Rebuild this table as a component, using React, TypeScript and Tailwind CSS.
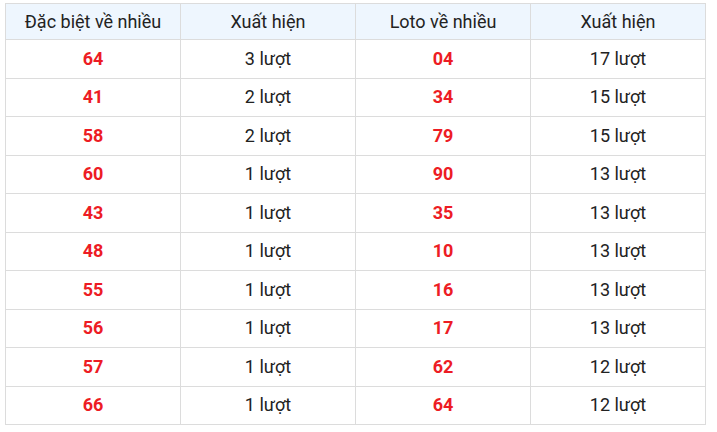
const ROWS: [string, number, string, number][] = [
  ["64", 3, "04", 17],
  ["41", 2, "34", 15],
  ["58", 2, "79", 15],
  ["60", 1, "90", 13],
  ["43", 1, "35", 13],
  ["48", 1, "10", 13],
  ["55", 1, "16", 13],
  ["56", 1, "17", 13],
  ["57", 1, "62", 12],
  ["66", 1, "64", 12],
]

const HEADERS = ["Đặc biệt về nhiều", "Xuất hiện", "Loto về nhiều", "Xuất hiện"]

export default function App() {
  return (
    <div className="h-[432px] w-[717px] bg-white pl-[5px] pt-[3px] font-['Roboto',sans-serif]">
      <table className="w-[701px] table-fixed border-collapse text-center text-[18px] leading-none text-[#222]">
        <thead>
          <tr className="h-[36px] bg-[#eef6fe]">
            {HEADERS.map((h, i) => (
              <th key={i} className="border border-[#dcdcdc] font-normal">
                {h}
              </th>
            ))}
          </tr>
        </thead>
        <tbody>
          {ROWS.map(([db, dbCount, loto, lotoCount]) => (
            <tr key={db + loto} className="h-[38.5px]">
              <td className="border border-[#dcdcdc] font-bold text-[#ed1c24]">{db}</td>
              <td className="border border-[#dcdcdc]">{dbCount} lượt</td>
              <td className="border border-[#dcdcdc] font-bold text-[#ed1c24]">{loto}</td>
              <td className="border border-[#dcdcdc]">{lotoCount} lượt</td>
            </tr>
          ))}
        </tbody>
      </table>
    </div>
  )
}
